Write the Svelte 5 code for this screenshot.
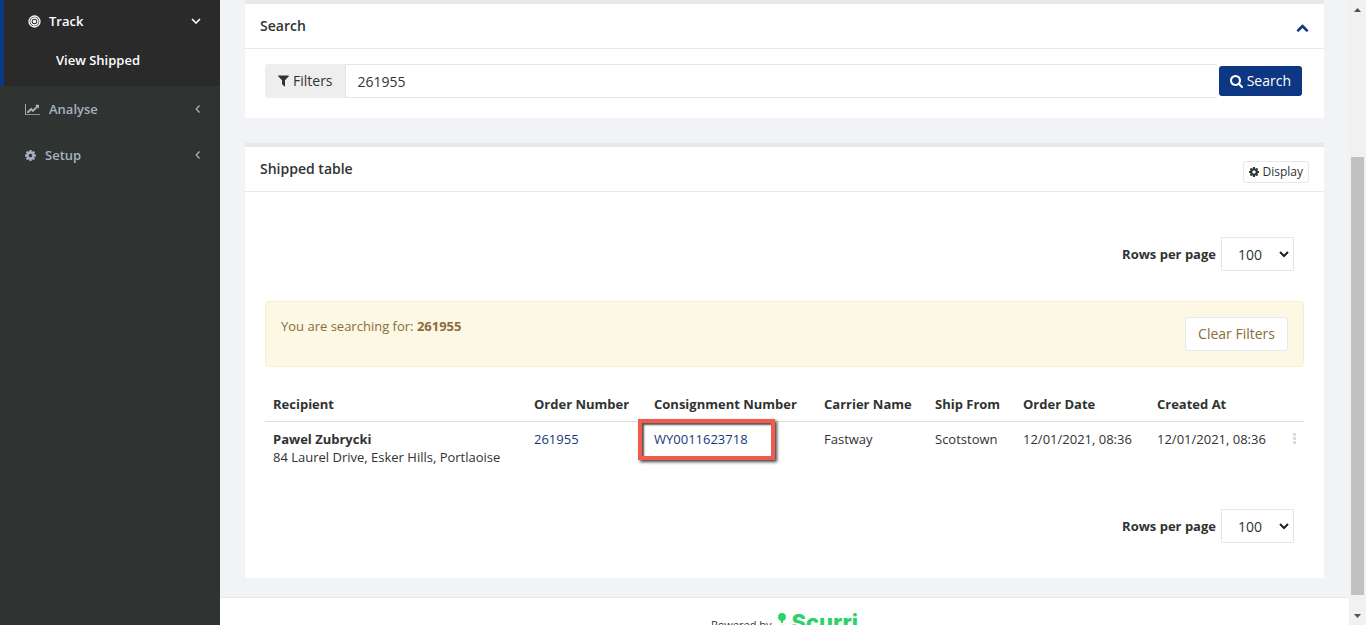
<script lang="ts">
  let query = $state('261955');
  let rowsPerPage = $state('100');
  const sizes = ['10', '25', '50', '100'];

  const columns = [
    { label: 'Recipient', cls: 'recipient' },
    { label: 'Order Number', cls: 'order' },
    { label: 'Consignment Number', cls: 'consignment' },
    { label: 'Carrier Name', cls: 'carrier' },
    { label: 'Ship From', cls: 'from' },
    { label: 'Order Date', cls: 'date' },
    { label: 'Created At', cls: 'date' },
  ];

  const cog =
    'M1152 896q0-106-75-181t-181-75-181 75-75 181 75 181 181 75 181-75 75-181zm512-109v222q0 12-8 23t-20 13l-185 28q-19 54-39 91 35 50 107 138 10 12 10 25t-9 23q-27 37-99 108t-94 71q-12 0-26-9l-138-108q-44 23-91 38-16 136-29 186-7 28-36 28h-222q-14 0-24.5-8.5t-11.5-21.5l-28-184q-49-16-90-37l-141 107q-10 9-25 9-14 0-25-11-126-114-165-168-7-10-7-23 0-12 8-23 15-21 51-66.5t54-70.5q-27-50-41-99l-183-27q-13-2-21-12.5t-8-23.5v-222q0-12 8-23t19-13l186-28q14-46 39-92-40-57-107-138-10-12-10-24 0-10 9-23 26-36 98.5-107.5t94.5-71.5q13 0 26 10l138 107q44-23 91-38 16-136 29-186 7-28 36-28h222q14 0 24.5 8.5t11.5 21.5l28 184q49 16 90 37l142-107q9-9 24-9 13 0 25 10 129 119 165 170 7 8 7 22 0 12-8 23-15 21-51 66.5t-54 70.5q26 50 41 98l183 28q13 2 21 12.5t8 23.5z';
</script>

{#snippet pager(id: string)}
  <div class="pager">
    <label for={id}>Rows per page</label>
    <span class="select">
      <select {id} bind:value={rowsPerPage}>
        {#each sizes as size}<option value={size}>{size}</option>{/each}
      </select>
      <svg width="10" height="7" viewBox="0 0 10 7" aria-hidden="true"><path d="M1 1l4 4 4-4" fill="none" stroke="#222" stroke-width="2" /></svg>
    </span>
  </div>
{/snippet}

<div class="app">
  <nav class="sidebar">
    <div class="active">
      <a class="item" href="#track">
        <svg class="target" width="13" height="13" viewBox="0 0 13 13" fill="none" stroke="currentColor"><circle cx="6.5" cy="6.5" r="5.5" stroke-width="1.3" /><circle cx="6.5" cy="6.5" r="3.5" stroke-width="1.4" /><circle cx="6.5" cy="6.5" r="1.8" fill="currentColor" stroke="none" /></svg>
        <span>Track</span>
        <svg class="arrow" width="10" height="6" viewBox="0 0 10 6"><path d="M1 1l4 4 4-4" fill="none" stroke="currentColor" stroke-width="1.6" /></svg>
      </a>
      <a class="sub" href="#shipped">View Shipped</a>
    </div>
    <a class="item" href="#analyse">
      <svg width="15" height="13" viewBox="0 0 2048 1792" fill="currentColor"><path d="M2048 1536v128h-2048v-1536h128v1408h1920zm-128-1248v435q0 21-19.5 29.5t-35.5-7.5l-121-121-633 633q-10 10-23 10t-23-10l-233-233-416 416-192-192 585-585q10-10 23-10t23 10l233 233 464-464-121-121q-16-16-7.5-35.5t29.5-19.5h435q14 0 23 9t9 23z" /></svg>
      <span>Analyse</span>
      <svg class="arrow" width="6" height="8" viewBox="0 0 6 8"><path d="M4.500 .5L1.200 4l3.300 3.500" fill="none" stroke="currentColor" stroke-width="1.3" /></svg>
    </a>
    <a class="item" href="#setup">
      <svg width="11" height="11" viewBox="128 128 1536 1536" fill="currentColor"><path d={cog} /></svg>
      <span>Setup</span>
      <svg class="arrow" width="6" height="8" viewBox="0 0 6 8"><path d="M4.500 .5L1.200 4l3.300 3.500" fill="none" stroke="currentColor" stroke-width="1.3" /></svg>
    </a>
  </nav>

  <main>
    <div class="content">
      <section class="panel">
        <header>
          <h5>Search</h5>
          <button class="collapse" aria-label="Collapse search">
            <svg width="13" height="13" viewBox="0 0 1792 1792" fill="currentColor"><path d="M1683 1331l-166 165q-19 19-45 19t-45-19l-531-531-531 531q-19 19-45 19t-45-19l-166-165q-19-19-19-45.500t19-45.500l742-741q19-19 45-19t45 19l742 741q19 19 19 45.500t-19 45.500z" /></svg>
          </button>
        </header>
        <form class="search" onsubmit={(e) => e.preventDefault()}>
          <button type="button" class="filters">
            <svg width="11" height="12" viewBox="190 256 1412 1408" fill="currentColor"><path d="M1595 295q17 41-14 70l-493 493v742q0 42-39 59-13 5-25 5-27 0-45-19l-256-256q-19-19-19-45v-486l-493-493q-31-29-14-70 17-39 59-39h1280q42 0 59 39z" /></svg>
            Filters
          </button>
          <input type="text" aria-label="Search shipments" bind:value={query} />
          <button class="submit">
            <svg width="13" height="13" viewBox="64 128 1664 1664" fill="currentColor"><path d="M1216 832q0-185-131.500-316.500t-316.500-131.500-316.500 131.500-131.500 316.500 131.500 316.500 316.500 131.500 316.500-131.500 131.500-316.500zm512 832q0 52-38 90t-90 38q-54 0-90-38l-343-342q-179 124-399 124-143 0-273.500-55.500t-225-150-150-225-55.500-273.500 55.500-273.500 150-225 225-150 273.500-55.500 273.500 55.500 225 150 150 225 55.500 273.500q0 220-124 399l343 343q37 37 37 90z" /></svg>
            Search
          </button>
        </form>
      </section>

      <section class="panel">
        <header>
          <h5>Shipped table</h5>
          <button class="display">
            <svg width="10" height="10" viewBox="128 128 1536 1536" fill="currentColor"><path d={cog} /></svg>
            Display
          </button>
        </header>
        <div class="results">
          {@render pager('rows-top')}
          <div class="alert">
            <p>You are searching for: <strong>261955</strong></p>
            <button>Clear Filters</button>
          </div>
          <table>
            <thead>
              <tr>
                {#each columns as column}<th class={column.cls}>{column.label}</th>{/each}
                <th class="menu" aria-label="Actions"></th>
              </tr>
            </thead>
            <tbody>
              <tr>
                <td><strong>Pawel Zubrycki</strong><br />84 Laurel Drive, Esker Hills, Portlaoise</td>
                <td><a href="#order">261955</a></td>
                <td class="marked"><a href="#consignment">WY0011623718</a><i class="marker"></i></td>
                <td>Fastway</td>
                <td>Scotstown</td>
                <td>12/01/2021, 08:36</td>
                <td>12/01/2021, 08:36</td>
                <td class="menu">
                  <button class="dots" aria-label="Row actions">
                    <svg width="3" height="11" viewBox="0 0 3 11" fill="#dcdcdc"><path d="M0 0h3v3H0zM0 4h3v3H0zM0 8h3v3H0z" /></svg>
                  </button>
                </td>
              </tr>
            </tbody>
          </table>
          {@render pager('rows-bottom')}
        </div>
      </section>
    </div>
    <footer>
      <span>Powered by</span>
      <a class="brand" href="#scurri">
        <svg width="10" height="24" viewBox="0 0 10 24" fill="#2bd267" aria-hidden="true"><circle cx="5" cy="5" r="3.900" /><path d="M4 8h2v3H4z" /><circle cx="5" cy="17" r="4.300" /></svg>
        Scurri
      </a>
    </footer>
  </main>

  <div class="scrollbar" aria-hidden="true">
    <svg width="7" height="4" viewBox="0 0 7 4" fill="#505050"><path d="M3.500 0L7 4H0z" /></svg>
    <div class="thumb"></div>
    <svg width="7" height="4" viewBox="0 0 7 4" fill="#505050"><path d="M3.500 4L7 0H0z" /></svg>
  </div>
</div>

<style>
  .app, .app * { box-sizing: border-box; }
  .app {
    display: flex;
    height: 100vh;
    overflow: hidden;
    font: 13px/18px "Open Sans", "Noto Sans", sans-serif;
    color: #2f3331;
    background: #f1f3f6;
  }
  svg { display: block; flex: none; }
  button, input, select { font: inherit; color: inherit; margin: 0; }
  button { cursor: pointer; }
  a { color: #153a78; text-decoration: none; }

  .sidebar { flex: 0 0 220px; background: #2f3331; }
  .active {
    height: 86px;
    background: #2a2a2a;
    border-left: 4px solid #0d3782;
  }
  .item {
    display: flex;
    align-items: center;
    height: 46px;
    padding: 0 19px 0 25px;
    gap: 9px;
    font-weight: 600;
    color: #a7b1c2;
  }
  .active .item { height: 42px; padding-left: 24px; gap: 8px; color: #fff; }
  .arrow { margin-left: auto; }
  .sub {
    display: block;
    padding: 9px 0 0 52px;
    font-weight: 600;
    color: #fff;
  }

  main { flex: 1; min-width: 0; }
  .content {
    display: grid;
    gap: 25px;
    padding: 0 25px 19px;
  }
  .panel { background: #fff; border-top: 4px solid #e7e8ea; min-width: 0; }
  .panel header {
    display: flex;
    align-items: flex-start;
    justify-content: space-between;
    height: 45px;
    padding: 13px 15px 0;
    border-bottom: 1px solid #e7e8ea;
  }
  h5 { margin: 0; font-size: 14px; line-height: 18px; font-weight: 600; }
  .collapse { margin-top: 4px; padding: 0; border: 0; background: none; color: #0d3782; }
  .display {
    display: flex;
    align-items: center;
    gap: 3px;
    height: 22px;
    margin-top: 1px;
    padding: 0 5px;
    font-size: 12px;
    background: #fff;
    border: 1px solid #e7e8ea;
    border-radius: 3px;
  }

  .search { display: flex; align-items: center; padding: 15px 22px 20px 20px; font-size: 14px; }
  .filters {
    display: flex;
    align-items: center;
    gap: 4px;
    height: 34px;
    padding: 0 13px;
    border: 0;
    border-radius: 3px 0 0 3px;
    background: #eee;
  }
  .search input {
    flex: 1;
    min-width: 0;
    height: 34px;
    margin-left: -1px;
    padding: 0 12px;
    border: 1px solid #e5e6e7;
    border-right: 0;
    background: #fff;
    outline: 0;
  }
  .submit {
    display: flex;
    align-items: center;
    gap: 4px;
    height: 30px;
    margin-left: 2px;
    padding: 0 11px;
    border: 0;
    border-radius: 3px;
    color: #fff;
    background: #0d3782;
  }

  .results { padding: 45px 20px 35px; }
  .pager {
    display: flex;
    align-items: center;
    justify-content: flex-end;
    gap: 5px;
    padding-right: 10px;
  }
  .pager label { font-weight: 700; }
  .select { position: relative; }
  select {
    display: block;
    appearance: none;
    width: 73px;
    height: 34px;
    padding: 1px 16px 0;
    font-size: 14px;
    border: 1px solid #e5e6e7;
    border-radius: 1px;
    background: #fff;
  }
  .select svg { position: absolute; right: 5px; top: 14px; pointer-events: none; }

  .alert {
    display: flex;
    justify-content: space-between;
    margin: 30px 0 20px;
    padding: 15px;
    color: #8a6d3b;
    background: #fcf8e3;
    border: 1px solid #f5efcf;
    border-radius: 4px;
  }
  .alert p { margin: 0; }
  .alert button {
    height: 34px;
    padding: 0 12px;
    font-size: 14px;
    background: #fff;
    border: 1px solid #e7eaec;
    border-radius: 3px;
  }

  table { width: 100%; margin-bottom: 35px; table-layout: fixed; border-collapse: separate; border-spacing: 0; }
  th, td { padding: 8px; text-align: left; vertical-align: top; }
  th { height: 35px; font-weight: 700; white-space: nowrap; border-bottom: 1px solid #ddd; }
  .order { width: 120px; }
  .consignment { width: 170px; }
  .carrier { width: 111px; }
  .from { width: 88px; }
  .date { width: 134px; }
  .menu { width: 21px; padding: 8px 0; }
  .dots { display: block; margin-left: 10px; padding: 3px 0; border: 0; background: none; }
  .marked { position: relative; }
  .marker {
    position: absolute;
    left: -8px;
    top: -3px;
    width: 137px;
    height: 41px;
    border: 4px solid #f15b4e;
    box-shadow: 2px 2px 3px #444, inset 2px 2px 2px #555;
    pointer-events: none;
  }

  footer {
    display: flex;
    justify-content: center;
    align-items: flex-start;
    gap: 6px;
    height: 60px;
    padding-top: 14px;
    background: #fff;
    border-top: 1px solid #e7eaec;
    font-size: 11px;
  }
  footer span { padding-top: 4px; }
  .brand {
    display: flex;
    gap: 4px;
    font: 800 22px/20px Inter, "Open Sans", sans-serif;
    color: #2bd267;
  }

  .scrollbar {
    flex: 0 0 17px;
    display: flex;
    flex-direction: column;
    align-items: center;
    padding: 8px 2px 7px;
    background: #f1f1f1;
  }
  .thumb { width: 13px; flex: 1; margin: 145px 0 19px; background: #c1c1c1; }
</style>
